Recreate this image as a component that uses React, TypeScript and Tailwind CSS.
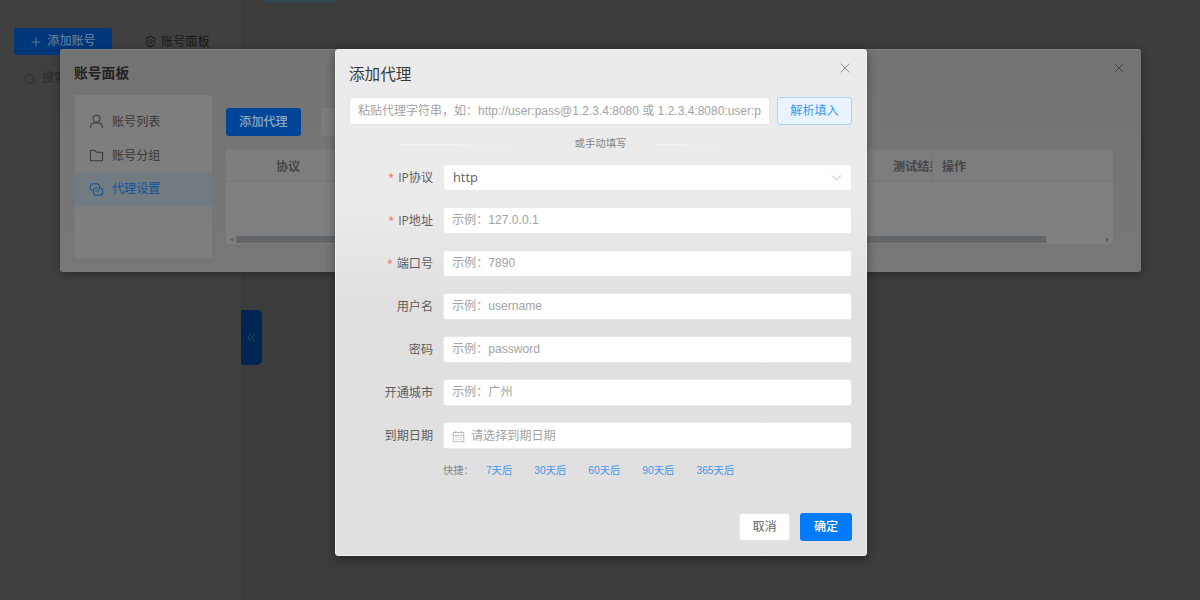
import React from 'react';

function LineIcon({ children, className }: { children: React.ReactNode; className: string }) {
  return (
    <svg viewBox="0 0 16 16" fill="none" stroke="currentColor" strokeWidth="1.1" className={className}>
      {children}
    </svg>
  );
}

function CloseIcon({ className }: { className: string }) {
  return (
    <LineIcon className={className}>
      <path d="M3 3l10 10M13 3L3 13" />
    </LineIcon>
  );
}

const fields = [
  { label: 'IP地址', hint: '示例：127.0.0.1', required: true },
  { label: '端口号', hint: '示例：7890', required: true },
  { label: '用户名', hint: '示例：username' },
  { label: '密码', hint: '示例：password' },
  { label: '开通城市', hint: '示例：广州' },
];

const shortcuts = ['7天后', '30天后', '60天后', '90天后', '365天后'];

function FormRow({ label, required, children }: { label: string; required?: boolean; children: React.ReactNode }) {
  return (
    <div className="flex h-[27px] items-center">
      <div className="flex w-[84px] shrink-0 items-center justify-end pt-[2px] text-[12.1px] text-[#5d5e60] font-['Open_Sans','Noto_Sans_CJK_SC',sans-serif]">
        {required && <span className="mb-[2px] mr-1 text-[10.5px] text-[#ee6b6b]">*</span>}
        {label}
      </div>
      <div className="ml-[10px] flex h-[27px] flex-1 items-center rounded-[3px] border border-[#e9e9ea] bg-white px-2 text-[12.1px] text-[#a2a3a5]">
        {children}
      </div>
    </div>
  );
}

/* Page behind both dialogs */
function BackPage() {
  return (
    <div className="flex h-full">
      <div className="w-[241px] shrink-0 bg-[#404040] px-[14px] pt-7">
        <div className="flex items-center">
          <div className="flex h-[27px] w-[98px] shrink-0 items-center justify-center rounded-[3px] bg-[#00377a] text-[12.1px] text-[#71879f]">
            <LineIcon className="mr-[5px] h-3 w-3">
              <path d="M8 2v12M2 8h12" />
            </LineIcon>
            添加账号
          </div>
          <div className="ml-8 flex shrink-0 items-center text-[12.2px] text-[#191919]">
            <LineIcon className="mr-1 h-[13px] w-[13px]">
              <path d="M6.400 1.500h3.200l.5 2 2-.5 1.600 2.800L12.300 8l1.400 2.200-1.600 2.800-2-.5-.5 2H6.400l-.5-2-2 .5-1.600-2.800L3.700 8 2.300 5.800 3.900 3l2 .5z" />
              <circle cx="8" cy="8" r="2.2" />
            </LineIcon>
            <span className="pt-px">账号面板</span>
          </div>
        </div>
        <div className="mt-[10px] flex h-[27px] items-center rounded-[3px] border border-[#3d3d3d] pl-[9px] text-[12.1px] text-[#292929]">
          <LineIcon className="mr-[6px] h-3 w-3">
            <circle cx="7.5" cy="7.5" r="6" />
            <path d="M12 12l3 3" />
          </LineIcon>
          搜索
        </div>
      </div>
      <div className="flex-1 bg-[#3c3c3c]">
        <div className="ml-6 h-[3px] w-[72px] rounded-b bg-[#344651]" />
        <div className="mt-[307px] flex h-[55px] w-[21px] items-center justify-center rounded-r-[5px] bg-[#002552] text-[#40536b]">
          <LineIcon className="h-[11px] w-[11px]">
            <path d="M8 2L2.500 8 8 14M13.500 2L8 8l5.500 6" />
          </LineIcon>
        </div>
      </div>
    </div>
  );
}

function AccountPanel() {
  return (
    <div className="absolute left-[60px] top-[49px] h-[223px] w-[1081px] rounded-[3px] border-t border-[#808080] bg-linear-to-b from-[#737373] to-[#777777] px-[15px] shadow-[0_2px_8px_#00000055]">
      <div className="flex h-[45px] items-center justify-between">
        <div className="-ml-px pt-[3px] text-[13.8px] font-bold text-[#222222]">账号面板</div>
        <CloseIcon className="mb-[9px] h-[14px] w-[14px] text-[#454545]" />
      </div>
      <div className="flex">
        <div className="h-[163px] w-[137px] rounded-[2px] bg-[#7e7e7e] pt-[10px] text-[12.1px] text-[#38393b]">
          <div className="flex h-[33px] items-center pl-[14px]">
            <LineIcon className="mr-2 h-[15px] w-[15px]">
              <circle cx="8" cy="5" r="3.7" />
              <path d="M1.700 15v-1c0-2.800 2-4.300 4.300-4.300h4c2.300 0 4.300 1.500 4.300 4.300v1" />
            </LineIcon>
            <span className="pt-[2px]">账号列表</span>
          </div>
          <div className="flex h-[34px] items-center pl-[14px]">
            <LineIcon className="mr-2 h-[15px] w-[15px]">
              <path d="M1.500 2.500h4.500l2 2h6.500v9h-13z" strokeLinejoin="round" />
            </LineIcon>
            <span className="pt-[2px]">账号分组</span>
          </div>
          <div className="flex h-[34px] items-center bg-[#727a82] pl-[14px] text-[#0b559f]">
            <LineIcon className="mr-2 h-[15px] w-[15px]">
              <path d="M3.500 9.600A3.200 3.200 0 0 1 1.200 6.500V5a3.200 3.200 0 0 1 3.200-3.200h3.800A3.200 3.200 0 0 1 11.400 5v1.400a3.200 3.200 0 0 1-3.200 3.200H6.800" />
              <path d="M12.500 6.400a3.200 3.200 0 0 1 2.300 3.100V11a3.200 3.200 0 0 1-3.200 3.200H7.800A3.200 3.200 0 0 1 4.600 11V9.600a3.200 3.200 0 0 1 3.200-3.200h1.400" />
            </LineIcon>
            <span className="pt-px">代理设置</span>
          </div>
        </div>
        <div className="ml-[14px] w-[887px] pt-[13px]">
          <div className="flex gap-5">
            <div className="flex h-[28px] w-[75px] items-center justify-center rounded-[3px] bg-[#004596] text-[12.1px] font-medium text-[#8fa6c0]">
              添加代理
            </div>
            <div className="h-[28px] w-[75px] rounded-[3px] bg-[#7c7c7c]" />
          </div>
          <div className="mt-[13px] h-[95px] rounded-[2px] bg-[#7f7f7f]">
            <div className="flex h-[33px] items-center border-b border-[#767676] bg-[#7d7d7d] text-[12.1px] font-bold text-[#45474a]">
              <div className="w-[667px] pl-[50px] pt-[4px]">协议</div>
              <div className="h-full w-[40px] overflow-hidden whitespace-nowrap border-r border-[#757575] pt-[2px] leading-[33px]">测试结果</div>
              <div className="pl-[9px] pt-[4px]">操作</div>
            </div>
            <div className="mt-[53px] flex h-[8px] items-center px-1">
              <svg viewBox="0 0 4 6" className="h-[5px] w-[3px]">
                <path d="M4 0v6L0 3z" fill="#606060" />
              </svg>
              <div className="ml-[3px] h-[7px] w-[810px] bg-[#64676a]" />
              <svg viewBox="0 0 4 6" className="ml-auto h-[5px] w-[3px]">
                <path d="M0 0v6l4-3z" fill="#5a5a5a" />
              </svg>
            </div>
          </div>
        </div>
      </div>
    </div>
  );
}

function AddProxyDialog() {
  return (
    <div className="absolute left-[335px] top-[49px] h-[507px] w-[532px] rounded-[3px] border border-[#f1f1f1] bg-linear-to-b from-[#ebebeb] from-30% to-[#e0e0e0] to-50% pl-[13px] pr-[14px] shadow-[0_3px_10px_#00000066]">
      <div className="flex h-[46px] items-center justify-between">
        <div className="pt-[3px] text-[15.6px] text-[#38393c]">添加代理</div>
        <CloseIcon className="mb-[10px] h-[14px] w-[14px] text-[#8b8c8f]" />
      </div>
      <div className="mt-px flex items-center gap-[7px]">
        <div className="h-[28px] w-[421px] rounded-[3px] border border-[#e4e5e8] bg-white px-2 text-xs leading-[26px] text-[#a2a3a5]">
          <div className="overflow-hidden whitespace-nowrap">
            粘贴代理字符串，如：http://user:pass@1.2.3.4:8080 或 1.2.3.4:8080:user:p
          </div>
        </div>
        <div className="flex h-[28px] flex-1 items-center justify-center rounded-[3px] border border-[#acd5fb] bg-[#e8f3fe] text-[12.1px] text-[#4098f0]">
          解析填入
        </div>
      </div>
      <div className="mt-[9px] flex h-5 items-center justify-center gap-7 text-[10.4px] text-[#858688]">
        <div className="h-px w-[147px] bg-linear-to-r from-[#f3f3f3] to-[#ebebeb]" />
        <span>或手动填写</span>
        <div className="h-px w-[147px] bg-linear-to-r from-[#f2f2f2] to-[#ebebeb] to-60%" />
      </div>
      <div className="mt-[10px] flex flex-col gap-4">
        <FormRow label="IP协议" required>
          <span className="pl-px text-[12.8px] text-[#606266] font-['Open_Sans',sans-serif]">http</span>
          <LineIcon className="ml-auto h-[13px] w-[13px] text-[#a8abb2]">
            <path d="M2.500 5.500L8 11l5.500-5.500" />
          </LineIcon>
        </FormRow>
        {fields.map((field) => (
          <FormRow key={field.label} label={field.label} required={field.required}>
            {field.hint}
          </FormRow>
        ))}
        <FormRow label="到期日期">
          <LineIcon className="mr-[6px] mt-px h-[13px] w-[13px]">
            <path d="M1.500 3h13v11.500h-13zM1.500 6.500h13M4.500 1v3M11.500 1v3" strokeWidth="0.9" />
            <path d="M4 9h2M7 9h2M10 9h2M4 12h2M7 12h2M10 12h2" strokeWidth="0.8" />
          </LineIcon>
          <span className="pt-[2px]">请选择到期日期</span>
        </FormRow>
      </div>
      <div className="ml-[94px] mt-3 flex h-5 items-center gap-[22px] text-[10.3px] text-[#4297ec]">
        <span className="-mr-[10px] text-[#858688]">快捷：</span>
        {shortcuts.map((item) => (
          <span key={item}>{item}</span>
        ))}
      </div>
      <div className="mt-8 flex justify-end gap-[10px] text-[12.1px]">
        <div className="flex h-[28px] w-[51px] items-center justify-center rounded-[3px] border border-[#e6e6e6] bg-white text-[#606266]">取消</div>
        <div className="flex h-[28px] w-[52px] items-center justify-center rounded-[3px] bg-[#007bff] font-medium text-white">确定</div>
      </div>
    </div>
  );
}

export default function App() {
  return (
    <div className="relative h-[600px] w-[1200px] overflow-hidden bg-[#3c3c3c] font-['Liberation_Sans','Noto_Sans_CJK_SC',sans-serif]">
      <BackPage />
      <AccountPanel />
      <AddProxyDialog />
    </div>
  );
}
